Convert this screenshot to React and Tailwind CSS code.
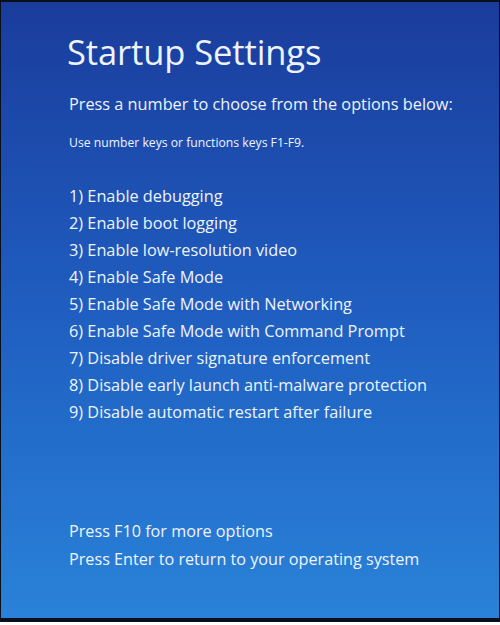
export default function App() {
  const items = [
    "1) Enable debugging",
    "2) Enable boot logging",
    "3) Enable low-resolution video",
    "4) Enable Safe Mode",
    "5) Enable Safe Mode with Networking",
    "6) Enable Safe Mode with Command Prompt",
    "7) Disable driver signature enforcement",
    "8) Disable early launch anti-malware protection",
    "9) Disable automatic restart after failure",
  ];
  return (
    <div className="w-[500px] h-[625px] bg-white" style={{ fontFamily: '"Open Sans", "Noto Sans", sans-serif' }}>
      <div className="w-[500px] h-[622px] border-t-[2px] border-b-[4px] border-x border-[#0a0f1c] bg-gradient-to-b from-[#1a3c9c] via-[#1f5ec0] to-[#2a82d8] text-[#eef4ff] flex flex-col pl-[66px]">
        <h1 className="text-[34.5px] leading-none mt-[33px] tracking-[-0.1px]">Startup Settings</h1>
        <p className="text-[16.3px] leading-none mt-[26px] ml-[2px]">Press a number to choose from the options below:</p>
        <p className="text-[12.2px] leading-none mt-[25px] ml-[2px]">Use number keys or functions keys F1-F9.</p>
        <div className="flex flex-col mt-[34px] ml-[2px]">
          {items.map((t) => (
            <div key={t} className="text-[16.3px] leading-[27px]">{t}</div>
          ))}
        </div>
        <div className="flex flex-col mt-auto mb-[45px] ml-[2px]">
          <div className="text-[16.2px] leading-[28px]">Press F10 for more options</div>
          <div className="text-[16.2px] leading-[28px]">Press Enter to return to your operating system</div>
        </div>
      </div>
    </div>
  );
}
